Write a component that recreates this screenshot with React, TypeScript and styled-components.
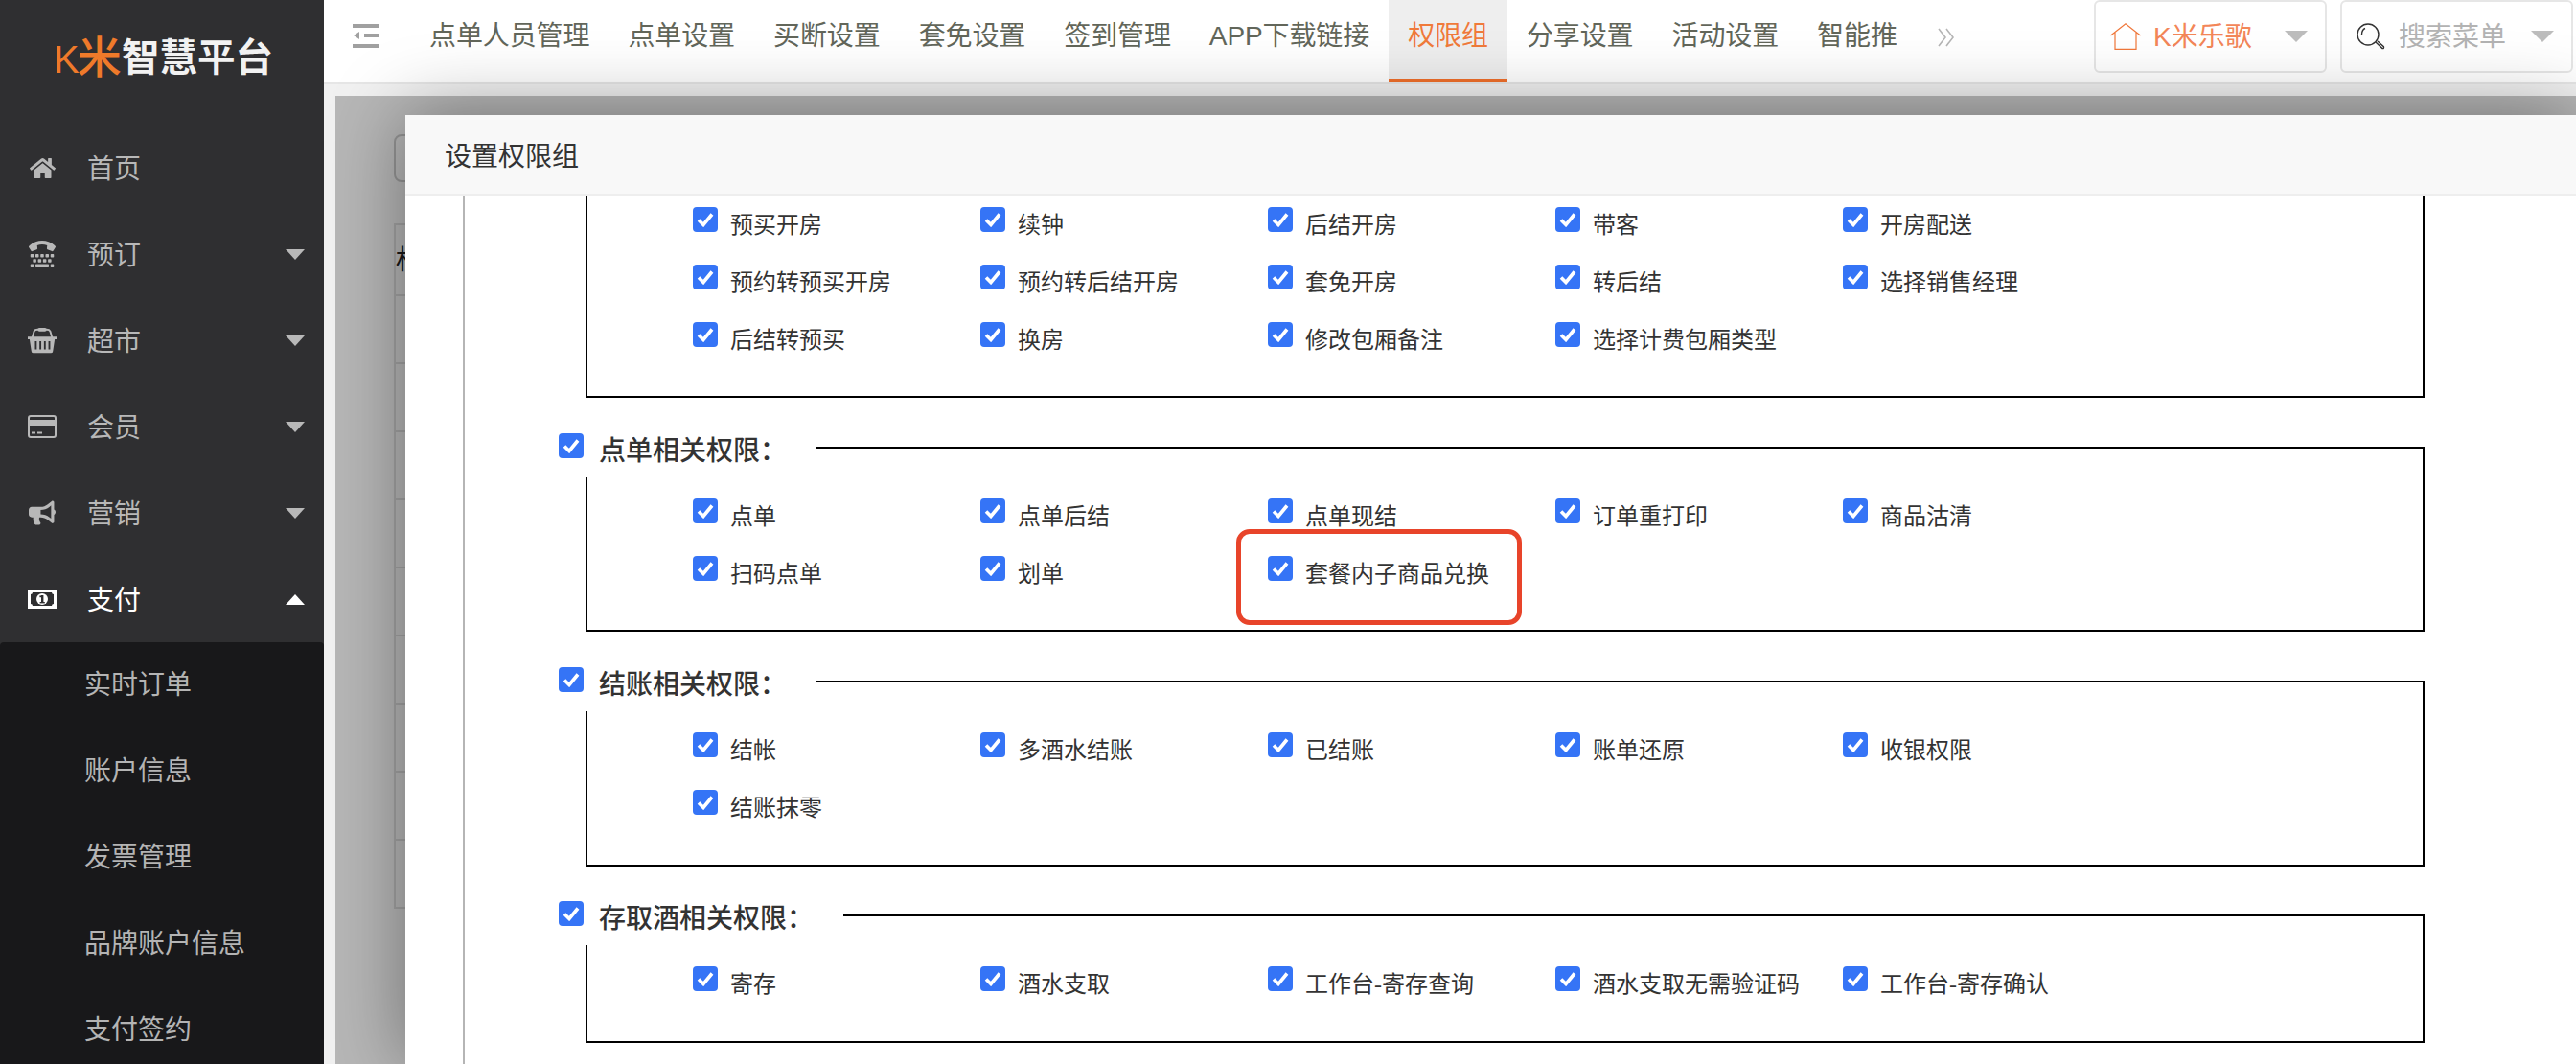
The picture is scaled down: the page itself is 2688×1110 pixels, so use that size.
import styled, { createGlobalStyle } from "styled-components";
import { FaHome, FaTty, FaBullhorn } from "react-icons/fa";

const sans = `"Liberation Sans", "Noto Sans CJK SC", sans-serif`;
const song = `"Liberation Serif", "Noto Sans CJK SC", serif`;

const GlobalStyle = createGlobalStyle`
  html, body {
    margin: 0;
    padding: 0;
    overflow: hidden;
  }
  * {
    box-sizing: border-box;
  }
`;

const menus = [
  { id: "home", name: "首页" },
  { id: "book", name: "预订", arrow: "down" },
  { id: "shop", name: "超市", arrow: "down" },
  { id: "member", name: "会员", arrow: "down" },
  { id: "market", name: "营销", arrow: "down" },
  { id: "pay", name: "支付", arrow: "up", active: true },
];

const subMenus = ["实时订单", "账户信息", "发票管理", "品牌账户信息", "支付签约"];

const tabs = ["点单人员管理", "点单设置", "买断设置", "套免设置", "签到管理", "APP下载链接", "权限组", "分享设置", "活动设置", "智能推"];

const groups = [
  {
    id: "room",
    rows: ["预买开房", "续钟", "后结开房", "带客", "开房配送", "预约转预买开房", "预约转后结开房", "套免开房", "转后结", "选择销售经理", "后结转预买", "换房", "修改包厢备注", "选择计费包厢类型"],
  },
  {
    id: "order",
    title: "点单相关权限：",
    rows: ["点单", "点单后结", "点单现结", "订单重打印", "商品沽清", "扫码点单", "划单", "套餐内子商品兑换"],
    mark: "套餐内子商品兑换",
  },
  {
    id: "bill",
    title: "结账相关权限：",
    rows: ["结帐", "多酒水结账", "已结账", "账单还原", "收银权限", "结账抹零"],
  },
  {
    id: "wine",
    title: "存取酒相关权限：",
    rows: ["寄存", "酒水支取", "工作台-寄存查询", "酒水支取无需验证码", "工作台-寄存确认"],
  },
];

const BasketIcon = () => (
  <svg width="32" height="28" viewBox="0 0 32 28" fill="none">
    <path d="M5 11 L7 4 Q8 2 11 2 H21 Q24 2 25 4 L27 11" stroke="currentColor" strokeWidth="2" />
    <rect x="11" y="0" width="10" height="4" rx="2" fill="currentColor" />
    <path d="M0 10 H32 V13 H30 L28 26 Q28 28 26 28 H6 Q4 28 4 26 L2 13 H0 Z" fill="currentColor" />
    <path d="M9 15 V24 M14 15 V24 M19 15 V24 M24 15 V24" stroke="#2f2f31" strokeWidth="2" />
  </svg>
);

const CardIcon = () => (
  <svg width="30" height="24" viewBox="0 0 30 24" fill="none">
    <rect x="1" y="1" width="28" height="22" rx="2" stroke="currentColor" strokeWidth="2" />
    <rect x="1" y="5" width="28" height="6" fill="currentColor" />
    <path d="M4 18.5 H8 M10 18.5 H15" stroke="currentColor" strokeWidth="2" />
  </svg>
);

const MoneyIcon = () => (
  <svg width="30" height="20" viewBox="0 0 30 20">
    <rect width="30" height="20" fill="currentColor" />
    <path d="M5 3 H25 Q25 5 27 5 V15 Q25 15 25 17 H5 Q5 15 3 15 V5 Q5 5 5 3 Z" fill="#2f2f31" />
    <circle cx="15" cy="10" r="6" fill="currentColor" />
    <rect x="14" y="6" width="2.4" height="8" fill="#2f2f31" />
    <rect x="12.4" y="6.4" width="2" height="1.8" fill="#2f2f31" />
    <rect x="12.6" y="13" width="5.2" height="1.4" fill="#2f2f31" />
  </svg>
);

const menuIcon = (id: string) => {
  if (id === "home") return <FaHome size={27} />;
  if (id === "book") return <FaTty size={28} />;
  if (id === "shop") return <BasketIcon />;
  if (id === "member") return <CardIcon />;
  if (id === "market") return <FaBullhorn size={28} />;
  return <MoneyIcon />;
};

const Tick = () => (
  <svg width="18" height="16" viewBox="0 0 18 16" fill="none">
    <path d="M2 8.5 L7 13.5 L16 2.5" stroke="#fff" strokeWidth="3.6" />
  </svg>
);

const Check = () => (
  <CheckBox>
    <Tick />
  </CheckBox>
);

const App = () => {
  return (
    <Page>
      <GlobalStyle />
      <Sidebar>
        <Logo>
          <LogoMark>K<b>米</b></LogoMark>
          <LogoName>智慧平台</LogoName>
        </Logo>
        {menus.map((m) => (
          <MenuItem key={m.id} $active={m.active}>
            <MenuIcon>{menuIcon(m.id)}</MenuIcon>
            <MenuName>{m.name}</MenuName>
            {m.arrow && <MenuArrow $up={m.arrow === "up"} />}
          </MenuItem>
        ))}
        <SubMenu>
          {subMenus.map((s) => (
            <SubItem key={s}>{s}</SubItem>
          ))}
        </SubMenu>
      </Sidebar>

      <Main>
        <Header>
          <Toggle>
            <svg width="28" height="25" viewBox="0 0 28 25" fill="#a0a0a0">
              <rect width="28" height="4" />
              <rect x="12" y="10" width="16" height="4" />
              <rect y="21" width="28" height="4" />
              <path d="M1 12 L7 8 V16 Z" />
            </svg>
          </Toggle>
          <Tabs>
            {tabs.map((t) => (
              <Tab key={t} $active={t === "权限组"}>{t}</Tab>
            ))}
          </Tabs>
          <More>
            <svg width="18" height="20" viewBox="0 0 18 20" fill="none" stroke="#b5b5b5" strokeWidth="1.6">
              <path d="M1 1 L8 10 L1 19 M9 1 L16 10 L9 19" />
            </svg>
          </More>
          <Select>
            <svg width="32" height="28" viewBox="0 0 32 28" fill="none" stroke="#f0773a" strokeWidth="1.2">
              <path d="M0.5 13 L16 0.8 L31.5 13 M5 10 V27.4 H27 V10" />
            </svg>
            <StoreName>K米乐歌</StoreName>
            <SelectArrow />
          </Select>
          <Select>
            <svg width="30" height="28" viewBox="0 0 30 28" fill="none" stroke="#333" strokeWidth="1.4">
              <circle cx="12" cy="12" r="11" />
              <path d="M5.5 12 Q5.5 7 9 5.5" />
              <path d="M20 20 L27 26.5 Q29 27 28.4 24.6 L22 19" />
            </svg>
            <SearchHint>搜索菜单</SearchHint>
            <SelectArrow />
          </Select>
        </Header>

        <Content>
          <Behind>
            <AddButton />
            <ListTable>
              <ListHead>权限组名称</ListHead>
              {Array.from({ length: 9 }).map((_, i) => (
                <ListRow key={i} />
              ))}
            </ListTable>
          </Behind>
          <Shade />
          <Modal>
            <ModalTitle>设置权限组</ModalTitle>
            <ModalBody>
              <Outer>
                {groups.map((g) =>
                  g.title ? (
                    <Group key={g.id}>
                      <GroupLegend>
                        <Check />
                        <LegendText>{g.title}</LegendText>
                      </GroupLegend>
                      <Grid>
                        {g.rows.map((r) => (
                          <Item key={r}>
                            <Check />
                            <ItemText>{r}</ItemText>
                            {g.mark === r && <RedMark />}
                          </Item>
                        ))}
                      </Grid>
                    </Group>
                  ) : (
                    <CutGroup key={g.id}>
                      <Grid>
                        {g.rows.map((r) => (
                          <Item key={r}>
                            <Check />
                            <ItemText>{r}</ItemText>
                          </Item>
                        ))}
                      </Grid>
                    </CutGroup>
                  )
                )}
              </Outer>
            </ModalBody>
          </Modal>
        </Content>
      </Main>
    </Page>
  );
};

export default App;

const Page = styled.div`
  display: flex;
  width: 2688px;
  height: 1110px;
  overflow: hidden;
  font-family: ${sans};
  background: #f1f1f1;
`;

const Sidebar = styled.aside`
  width: 338px;
  flex: none;
  background: #2f2f31;
`;

const Logo = styled.div`
  height: 130px;
  padding: 34px 0 0 56px;
  display: flex;
  align-items: flex-start;
  line-height: 52px;
`;

const LogoMark = styled.div`
  width: 71px;
  font-size: 40px;
  font-weight: 400;
  color: #ef7a2a;
  white-space: nowrap;
  letter-spacing: -2px;

  b {
    font-weight: 500;
    font-size: 46px;
  }
`;

const LogoName = styled.div`
  font-size: 39.5px;
  font-weight: 700;
  color: #f2f2f2;
  white-space: nowrap;
`;

const MenuItem = styled.div<{ $active?: boolean }>`
  height: 90px;
  display: flex;
  align-items: center;
  padding-left: 29px;
  color: ${(props) => (props.$active ? "#ffffff" : "#b8b8b8")};
`;

const MenuIcon = styled.span`
  width: 30px;
  height: 30px;
  display: flex;
  align-items: center;
  justify-content: center;
  margin-right: 32px;
`;

const MenuName = styled.span`
  width: 207px;
  padding-bottom: 3px;
  font-size: 28px;
`;

const MenuArrow = styled.span<{ $up?: boolean }>`
  width: 0;
  height: 0;
  border-left: 10px solid transparent;
  border-right: 10px solid transparent;
  ${(props) =>
    props.$up
      ? "border-bottom: 11px solid currentColor;"
      : "border-top: 11px solid currentColor;"}
`;

const SubMenu = styled.div`
  background: #18181a;
  border-radius: 4px 4px 0 0;
`;

const SubItem = styled.div`
  height: 90px;
  padding-left: 88px;
  font-size: 28px;
  line-height: 90px;
  color: #b4b4b4;
`;

const Main = styled.div`
  flex: 1;
  min-width: 0;
  display: flex;
  flex-direction: column;
`;

const Header = styled.header`
  height: 88px;
  flex: none;
  display: flex;
  align-items: flex-start;
  background: #fff;
  border-bottom: 2px solid #e6e6e6;
`;

const Toggle = styled.div`
  width: 90px;
  padding: 25px 0 0 30px;
  flex: none;
  line-height: 0;
`;

const Tabs = styled.nav`
  width: 1553px;
  flex: none;
  display: flex;
  overflow: hidden;
`;

const Tab = styled.div<{ $active?: boolean }>`
  height: 86px;
  flex: none;
  padding: 0 20px;
  font-size: 28px;
  line-height: 75px;
  white-space: nowrap;
  letter-spacing: -0.1px;
  color: ${(props) => (props.$active ? "#f07a3a" : "#62665a")};
  background: ${(props) => (props.$active ? "#eeeeee" : "transparent")};
  border-bottom: 4px solid ${(props) => (props.$active ? "#f06f2a" : "transparent")};
`;

const More = styled.div`
  width: 204px;
  flex: none;
  padding: 29px 0 0 41px;
  line-height: 0;
`;

const Select = styled.div`
  width: 243px;
  height: 76px;
  flex: none;
  margin-right: 14px;
  padding: 22px 18px 0 15px;
  display: flex;
  align-items: flex-start;
  gap: 13px;
  border: 2px solid #e6e6e6;
  border-radius: 6px;
  line-height: 29px;
  font-size: 28px;
`;

const StoreName = styled.span`
  color: #f38658;
  flex: 1;
`;

const SearchHint = styled.span`
  margin-left: 1px;
  color: #b3b3b3;
  flex: 1;
`;

const SelectArrow = styled.span`
  width: 0;
  height: 0;
  margin-top: 8px;
  border-left: 12px solid transparent;
  border-right: 12px solid transparent;
  border-top: 12px solid #bdbdbd;
`;

const Content = styled.div`
  position: relative;
  flex: 1;
  margin: 12px 0 0 12px;
  background: #f1f1f1;
`;

const Behind = styled.div`
  padding: 40px 0 0 61px;
`;

const AddButton = styled.div`
  width: 160px;
  height: 50px;
  border: 2px solid #c4c4c4;
  border-radius: 8px;
`;

const ListTable = styled.div`
  width: 1800px;
  margin-top: 43px;
  border: 2px solid #d6d6d6;
  border-bottom: 0;
`;

const ListHead = styled.div`
  height: 74px;
  font-family: ${song};
  font-size: 28px;
  line-height: 74px;
  color: #222;
  background: #f0f0f0;
  border-bottom: 2px solid #d6d6d6;
`;

const ListRow = styled.div`
  height: 71px;
  border-bottom: 2px solid #d6d6d6;
`;

const Shade = styled.div`
  position: absolute;
  inset: 0;
  background: rgba(0, 0, 0, 0.24);
`;

const Modal = styled.div`
  position: absolute;
  left: 73px;
  top: 20px;
  right: 0;
  bottom: 0;
  display: flex;
  flex-direction: column;
  background: #fff;
  border-radius: 6px 0 0 0;
  box-shadow: 0 0 80px rgba(0, 0, 0, 0.4);
`;

const ModalTitle = styled.div`
  height: 84px;
  flex: none;
  padding-left: 41px;
  font-family: ${song};
  font-size: 28px;
  line-height: 88px;
  color: #333;
  background: #f8f8f8;
  border-bottom: 2px solid #eeeeee;
`;

const ModalBody = styled.div`
  flex: 1;
  overflow: hidden;
`;

const Outer = styled.div`
  margin-left: 60px;
  padding: 0 0 60px 126px;
  border-left: 2px solid #b5b5b5;
  font-family: ${song};
  color: #333;
`;

const CutGroup = styled.div`
  width: 1919px;
  padding: 12px 0 17px 110px;
  border: 2px solid #000;
  border-top: 0;
`;

const Group = styled.fieldset`
  width: 1919px;
  min-width: 0;
  margin: 21px 0 0;
  padding: 22px 0 18px 110px;
  border: 2px solid #000;

  &:first-of-type {
    padding-bottom: 17px;
  }
  &:last-of-type {
    margin-top: 20px;
  }
`;

const GroupLegend = styled.legend`
  height: 62px;
  margin-left: -140px;
  padding: 16px 31px 0 0;
  display: flex;
  align-items: flex-start;
  gap: 16px;
`;

const LegendText = styled.span`
  margin-top: -2px;
  font-size: 28px;
  font-weight: 500;
  line-height: 42px;
  color: #333;
`;

const Grid = styled.div`
  display: grid;
  grid-template-columns: repeat(5, 300px);
  grid-auto-rows: 60px;
`;

const Item = styled.div`
  position: relative;
  display: flex;
  align-items: flex-start;
  gap: 14px;
`;

const CheckBox = styled.span`
  width: 26px;
  height: 26px;
  flex: none;
  display: flex;
  align-items: center;
  justify-content: center;
  background: #3574f6;
  border-radius: 4px;
`;

const ItemText = styled.span`
  margin-left: -1px;
  font-size: 24px;
  line-height: 38px;
  white-space: nowrap;
`;

const RedMark = styled.span`
  position: absolute;
  left: -33px;
  top: -28px;
  width: 298px;
  height: 100px;
  border: 5px solid #e8442a;
  border-radius: 14px;
`;
